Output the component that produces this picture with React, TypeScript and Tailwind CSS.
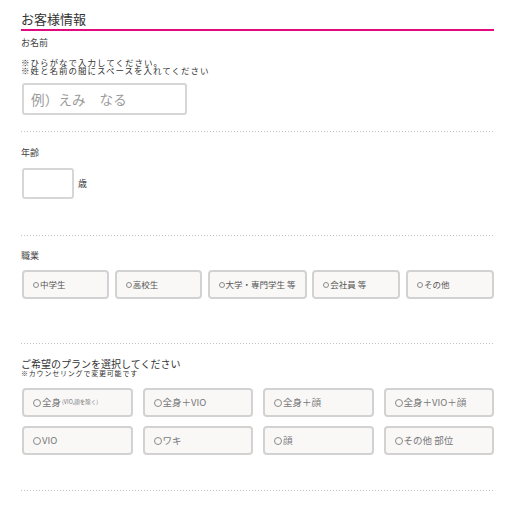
const jobs = [
  { label: '中学生', w: 'w-[87px]' },
  { label: '高校生', w: 'w-[87px]' },
  { label: '大学・専門学生 等', w: 'w-[99px]' },
  { label: '会社員 等', w: 'w-[88px]' },
  { label: 'その他', w: 'w-[88px]' },
];

const plans = ['全身', '全身＋VIO', '全身＋顔', '全身＋VIO＋顔', 'VIO', 'ワキ', '顔', 'その他 部位'];

function Dotted({ className = '' }: { className?: string }) {
  return (
    <div
      className={`h-px w-[474px] bg-[linear-gradient(to_right,#c2c2c2_1px,transparent_1px)] bg-[length:3px_1px] ${className}`}
    />
  );
}

function Circle({ size }: { size: 'sm' | 'md' }) {
  return (
    <span
      className={`inline-block shrink-0 rounded-full border border-[#8a8a8a] ${
        size === 'sm' ? 'h-[6px] w-[6px] mr-[1px]' : 'h-[8px] w-[8px] mr-[1px]'
      }`}
    />
  );
}

export default function App() {
  return (
    <div
      className="w-[516px] h-[505px] bg-white pl-[21px] text-[#444]"
      style={{ fontFamily: '"Noto Sans CJK JP", "Noto Sans", sans-serif' }}
    >
      {/* Section title */}
      <div className="w-[473px] pt-[9px] border-b-2 border-[#e5097f]">
        <h2 className="text-[13px] leading-[20px] text-[#333]">お客様情報</h2>
      </div>

      {/* Name */}
      <p className="mt-[6px] text-[9px] leading-[12px]">お名前</p>
      <p className="mt-[9px] text-[8.5px] leading-[8px] tracking-[1px] text-[#333]">
        ※ひらがなで入力してください。
        <br />
        ※姓と名前の間にスペースを入れてください
      </p>
      <div className="mt-[9px] ml-px h-[32px] w-[165px] rounded-[3px] border-2 border-[#d6d6d6] bg-white flex items-center pl-[7px]">
        <span className="text-[13.5px] text-[#9a9a9a] tracking-[0.2px]">例）えみ　なる</span>
      </div>

      <Dotted className="mt-[16px]" />

      {/* Age */}
      <p className="mt-[15px] text-[9px] leading-[12px]">年齢</p>
      <div className="mt-[9px] ml-px flex items-center gap-[4px]">
        <div className="h-[31px] w-[52px] rounded-[3px] border-2 border-[#d6d6d6] bg-white" />
        <span className="text-[9px] text-[#333]">歳</span>
      </div>

      <Dotted className="mt-[36px]" />

      {/* Job */}
      <p className="mt-[14px] text-[9px] leading-[12px]">職業</p>
      <div className="mt-[8px] ml-px w-[472px] flex justify-between">
        {jobs.map((j) => (
          <div
            key={j.label}
            className={`${j.w} h-[29px] rounded-[4px] border-2 border-[#d2d2d2] bg-[#f9f8f7] flex items-center pl-[9px] text-[8.5px] text-[#555]`}
          >
            <Circle size="sm" />
            {j.label}
          </div>
        ))}
      </div>

      <Dotted className="mt-[44px]" />

      {/* Plan */}
      <p className="mt-[14px] text-[10px] leading-[11px] text-[#333]">ご希望のプランを選択してください</p>
      <p className="text-[7px] leading-[8px] tracking-[0.8px] text-[#333]">※カウンセリングで変更可能です</p>
      <div className="mt-[11px] ml-px w-[472px] grid grid-cols-4 gap-x-[10px] gap-y-[9px]">
        {plans.map((p, i) => (
          <div
            key={p}
            className="h-[29px] rounded-[4px] border-2 border-[#d2d2d2] bg-[#f9f8f7] flex items-center pl-[9px] text-[9.5px] text-[#777]"
          >
            <Circle size="md" />
            {p}
            {i === 0 && <span className="text-[5.5px] ml-[1px]">(VIO,顔を除く)</span>}
          </div>
        ))}
      </div>

      <Dotted className="mt-[35px]" />
    </div>
  );
}
